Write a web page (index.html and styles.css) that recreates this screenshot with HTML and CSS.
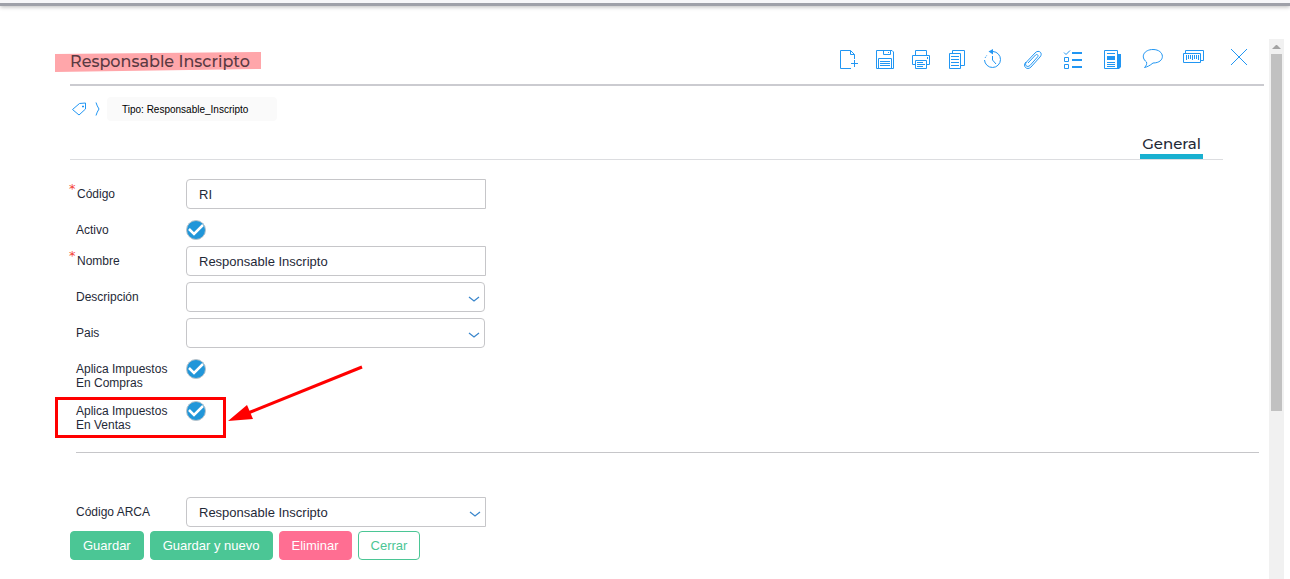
FILE: index.html
```html
<!DOCTYPE html>
<html lang="es">
<head>
    <meta charset="UTF-8">
    <title>Responsable Inscripto</title>
    <link rel="stylesheet" href="styles.css">
</head>
<body>
<div class="topbar"></div>
<div class="window">
    <main class="content">
        <header class="header">
            <h1 class="title">
                <svg class="marker" viewBox="0 0 206 20" preserveAspectRatio="none"><path d="M0 2L206 0V17L0 20Z" fill="#ffa6aa"/></svg>
                <span>Responsable Inscripto</span>
            </h1>
            <div class="toolbar">
                <button type="button" class="tool" aria-label="Nuevo">
                    <svg width="20" height="20"><path d="M12 18.500H1.500V.5H11.500L15.500 4.500V9M11.500 .5V4.500H15.500M15.500 10V17M12 13.500H19"/></svg>
                </button>
                <button type="button" class="tool" aria-label="Guardar">
                    <svg width="20" height="20"><path d="M1.500 .5H17L18.500 2V18.500H1.500ZM8.500 .5V4.500H15.500V.5M13.500 2V3M3.500 18.500V8.500H16.500V18.500M5 11.500H15M5 13.500H15M5 15.500H15"/></svg>
                </button>
                <button type="button" class="tool" aria-label="Imprimir">
                    <svg width="20" height="20"><path d="M4.500 5.500V.5H15.500V5.500M4.500 14.500H1.500V5.500H18.500V14.500H15.500M4.500 10.500H15.500V18.500H4.500ZM6 12.500H12M6 14.500H14M6 16.500H12M16.500 7V9"/></svg>
                </button>
                <button type="button" class="tool" aria-label="Copiar">
                    <svg width="20" height="20"><path d="M5.500 3V.5H17.500V15.500H14M2.500 3.500H13.500V18.500H2.500ZM4 6.500H12M4 9.500H12M4 12.500H12M4 15.500H12"/></svg>
                </button>
                <button type="button" class="tool" aria-label="Historial">
                    <svg width="20" height="20"><path d="M2.500 6.500M1.500 10A8 8 0 1 0 10 1.500M9.500 6V10L13 14"/><path d="M2 8L4 5" stroke-dasharray="1 1"/><path class="solid" d="M5.500 1.500L10 -1V4.500Z"/></svg>
                </button>
                <button type="button" class="tool tool-wide tool-group" aria-label="Adjuntar">
                    <svg width="20" height="20"><path d="M5 13L12.500 5C14 3.500 16 5.500 14.500 7L7 15.500C4 18 1 15 3.500 12L12 3C15.500-1 20.500 3 17 7L8 17C4 21-1 16 3 12"/></svg>
                </button>
                <button type="button" class="tool tool-wide" aria-label="Lista">
                    <svg width="20" height="20"><path d="M1 2.500L3 4.500L7 .5M1.500 7.500H5.500V11.500H1.500ZM1.500 14.500H5.500V18.500H1.500Z"/><path class="thick" d="M9 3H19M9 10H19M9 17H19"/></svg>
                </button>
                <button type="button" class="tool tool-wide" aria-label="Novedades">
                    <svg width="20" height="20"><path d="M1.500 .5H14.500V18.500H1.500ZM4 3.500H12M4 12.500H12M4 14.500H12M4 16.500H12"/><path class="solid" d="M4 6H12V10H4ZM15 4H18V17L16 19H14Z"/></svg>
                </button>
                <button type="button" class="tool tool-wide" aria-label="Comentarios">
                    <svg width="22" height="20"><path d="M4.500 12C-2 7 2 -.5 11 -.5C23-.5 24 13 11 13C8 15.500 5 17 2.500 17.500C4.500 15.500 5 14 4.500 12Z"/></svg>
                </button>
                <button type="button" class="tool tool-wide" aria-label="Código de barras">
                    <svg width="22" height="20"><path d="M3.500 3V.5H21.500V10.500H19M1.500 3.500H18.500V12.500H1.500ZM4.500 5V10M6.500 5V9M8.500 5V9M10.500 5V10M12.500 5V9M14.500 5V9M16.500 5V10"/></svg>
                </button>
                <button type="button" class="tool tool-close" aria-label="Cerrar ventana">
                    <svg width="18" height="20"><path d="M1-1L17 15M17-1L1 15"/></svg>
                </button>
            </div>
        </header>

        <div class="crumbs">
            <svg class="crumb-icon" width="16" height="16" viewBox="0 0 16 16"><path d="M8.500 2.500L14.500 2L14.500 8L8 14L1.500 8.500ZM11.500 5H12.500V6H11.500Z"/></svg>
            <svg class="crumb-icon" width="6" height="16" viewBox="0 0 6 16"><path d="M2 1.500Q3 5 5 8Q3 11 2 14.500"/></svg>
            <span class="crumb">Tipo: Responsable_Inscripto</span>
        </div>

        <nav class="tabs">
            <a href="#general" class="tab">General</a>
        </nav>

        <form id="general" class="form">
            <div class="row">
                <label for="codigo" class="required">Código</label>
                <input type="text" id="codigo" class="field" value="RI">
            </div>
            <div class="row row-check">
                <label for="activo">Activo</label>
                <input type="checkbox" id="activo" class="check" checked>
            </div>
            <div class="row">
                <label for="nombre" class="required">Nombre</label>
                <input type="text" id="nombre" class="field" value="Responsable Inscripto">
            </div>
            <div class="row">
                <label for="descripcion">Descripción</label>
                <select id="descripcion" class="field field-select"><option></option></select>
            </div>
            <div class="row">
                <label for="pais">Pais</label>
                <select id="pais" class="field field-select"><option></option></select>
            </div>
            <div class="row row-check">
                <label for="compras">Aplica Impuestos En Compras</label>
                <input type="checkbox" id="compras" class="check" checked>
            </div>
            <div class="row row-check">
                <label for="ventas">Aplica Impuestos En Ventas</label>
                <input type="checkbox" id="ventas" class="check" checked>
                <div class="callout"></div>
                <svg class="arrow" width="136" height="58"><path d="M134 2L20 48" stroke="#f00" stroke-width="3"/><path d="M0 56L19 40L25 54Z" fill="#f00"/></svg>
            </div>
            <hr class="divider">
            <div class="row">
                <label for="arca">Código ARCA</label>
                <select id="arca" class="field field-select field-arca"><option>Responsable Inscripto</option></select>
            </div>
            <div class="actions">
                <button type="button" class="btn">Guardar</button>
                <button type="button" class="btn">Guardar y nuevo</button>
                <button type="button" class="btn btn-danger">Eliminar</button>
                <button type="button" class="btn btn-outline">Cerrar</button>
            </div>
        </form>
    </main>
    <div class="scrollbar">
        <div class="scroll-up"></div>
        <div class="scroll-track"><div class="scroll-thumb"></div></div>
    </div>
</div>
</body>
</html>
```
FILE: styles.css
```css
* {
    box-sizing: border-box;
}
body {
    display: flex;
    flex-direction: column;
    min-height: 100vh;
    margin: 0;
    background: #fff;
    color: #1f2937;
    font-family: "Liberation Sans", Arial, sans-serif;
    font-size: 12px;
    line-height: 14px;
}
.topbar {
    height: 6px;
    background: #f7f7f9;
    border-bottom: 3px solid #9fa1a9;
    box-shadow: 0 1px 4px #bbb;
}
.window {
    display: flex;
    flex: 1;
    padding: 33px 6px 0 0;
}
.content {
    flex: 1;
    padding: 0 5px 0 70px;
}

/* header */
.header {
    display: flex;
    justify-content: space-between;
    height: 47px;
    border-bottom: 2px solid #cbcbd0;
}
.title {
    position: relative;
    margin: 0;
    padding-top: 12px;
    color: #5a3a42;
    font-family: Montserrat, Inter, sans-serif;
    font-size: 16px;
    font-weight: 500;
    line-height: 22px;
}
.title span {
    position: relative;
}
.marker {
    position: absolute;
    left: -15px;
    top: 13px;
    width: 206px;
    height: 20px;
}
.toolbar {
    display: flex;
    height: 42px;
}
.tool {
    display: flex;
    align-items: center;
    justify-content: center;
    width: 36px;
    padding: 0;
    border: 0;
    background: none;
    cursor: pointer;
}
.tool-wide {
    width: 40px;
}
.tool-group {
    margin-left: 2px;
}
.tool-close {
    width: 51px;
    padding-left: 1px;
}
.tool svg,
.crumb-icon {
    overflow: visible;
    fill: none;
    stroke: #2196f3;
}
.tool .solid {
    fill: #2196f3;
    stroke: none;
}
.tool .thick {
    stroke-width: 2;
}

/* breadcrumb and tabs */
.crumbs {
    display: flex;
    align-items: center;
    height: 24px;
    margin-top: 11px;
    padding-left: 1px;
}
.crumb-icon {
    margin-right: 7px;
}
.crumb {
    width: 170px;
    padding: 1px 15px 0;
    border-radius: 4px;
    background: #fafafa;
    color: #000;
    font-size: 10px;
    line-height: 23px;
}
.tabs {
    display: flex;
    justify-content: flex-end;
    height: 39px;
    margin-right: 41px;
    padding-right: 20px;
    border-bottom: 1px solid #dcdde0;
}
.tab {
    height: 38px;
    padding: 13px 2px 0;
    border-bottom: 5px solid #19b0d0;
    color: #1f2937;
    font-family: Montserrat, Inter, sans-serif;
    font-size: 15px;
    font-weight: 500;
    line-height: 20px;
    text-decoration: none;
}

/* form */
.form {
    padding-top: 19px;
}
.row {
    position: relative;
    display: grid;
    grid-template-columns: 104px 300px;
    column-gap: 6px;
    align-items: start;
    margin-bottom: 6px;
    padding-left: 6px;
}
.row label {
    padding: 8px 10px 0 0;
}
.row .required {
    padding-left: 1px;
}
.required::before {
    content: "*";
    position: absolute;
    left: -1px;
    top: 3px;
    color: #f44336;
    font-family: "DejaVu Sans", sans-serif;
    font-size: 13px;
}
.field {
    width: 300px;
    height: 30px;
    margin: 0;
    padding: 0 12px;
    border: 1px solid #c6c6c9;
    border-radius: 4px 0 0 4px;
    background-color: #fff;
    color: #1f2937;
    font-family: inherit;
    font-size: 13px;
}
.field-select {
    width: 299px;
    appearance: none;
    border-radius: 4px;
    background-image: url("data:image/svg+xml,%3Csvg xmlns='http://www.w3.org/2000/svg' width='12' height='6'%3E%3Cpath d='M1 1L6 5L11 1' fill='none' stroke='%233b87cc' stroke-width='1.300'/%3E%3C/svg%3E");
    background-repeat: no-repeat;
    background-position: right 4px top 13px;
}
.field-arca {
    width: 300px;
    border-radius: 4px 0 0 4px;
}
.check {
    appearance: none;
    width: 20px;
    height: 20px;
    margin: 5px 0 0;
    border: 1px solid #b9c3ca;
    border-radius: 50%;
    background: #2196d9 url("data:image/svg+xml,%3Csvg xmlns='http://www.w3.org/2000/svg' width='18' height='18'%3E%3Cpath d='M2 8L7 13L16 4' fill='none' stroke='white' stroke-width='2.500'/%3E%3C/svg%3E") center no-repeat;
}
.callout {
    position: absolute;
    left: -15px;
    top: 1px;
    width: 171px;
    height: 41px;
    border: 3px solid #f00;
}
.arrow {
    position: absolute;
    left: 158px;
    top: -31px;
}
.divider {
    height: 1px;
    margin: 20px 5px 44px 6px;
    border: 0;
    background: #c6c6c9;
}
.actions {
    display: flex;
    gap: 6px;
    margin-top: -2px;
}
.btn {
    height: 29px;
    padding: 0 12px;
    border: 1px solid #4bc695;
    border-radius: 4px;
    background: #4bc695;
    color: #fff;
    font-family: inherit;
    font-size: 13px;
    cursor: pointer;
}
.btn-danger {
    border-color: #ff6e92;
    background: #ff6e92;
}
.btn-outline {
    background: #fff;
    color: #4bc695;
}

/* side scrollbar */
.scrollbar {
    display: flex;
    flex-direction: column;
    width: 15px;
    background: #f1f1f1;
}
.scroll-up {
    height: 15px;
    padding: 6px 3px;
}
.scroll-up::before {
    content: "";
    display: block;
    border: 4px solid transparent;
    border-top: 0;
    border-bottom-color: #a3a3a3;
}
.scroll-track {
    flex: 1;
    padding: 0 2px;
}
.scroll-thumb {
    height: 68%;
    background: #c1c1c1;
}
```
